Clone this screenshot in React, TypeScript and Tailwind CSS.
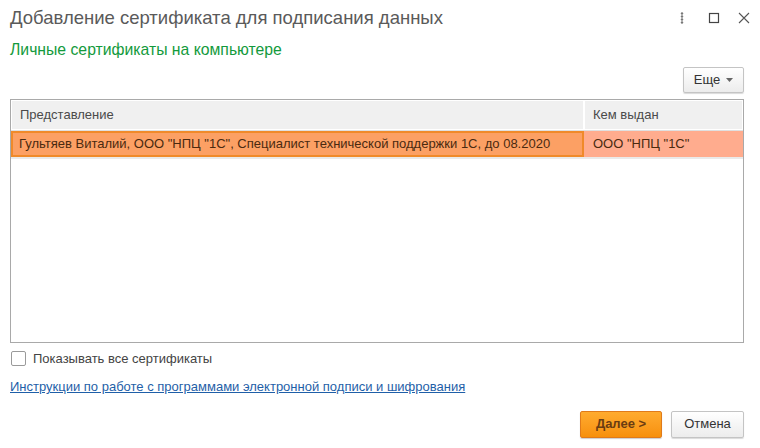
export default function App() {
  return (
    <div className="relative h-[448px] w-[760px] overflow-hidden bg-white font-['Liberation_Sans',Arial,sans-serif] text-[#333]">
      {/* title bar */}
      <div className="flex h-[36px] items-center pl-[10px] pr-[8px]">
        <h1 className="flex-1 text-[18.5px] text-[#5a5a5a]">Добавление сертификата для подписания данных</h1>
        <div className="flex items-center gap-[18px] pr-[2px]">
          <svg width="4" height="12" viewBox="0 0 4 12" className="mr-[6px]">
            <circle cx="2" cy="1.5" r="1.2" fill="#777" />
            <circle cx="2" cy="4.5" r="1.2" fill="#777" />
            <circle cx="2" cy="7.5" r="1.2" fill="#777" />
            <circle cx="2" cy="10.5" r="1.2" fill="#777" />
          </svg>
          <svg width="12" height="12" viewBox="0 0 12 12">
            <rect x="1.5" y="1.5" width="9" height="9" fill="none" stroke="#444" strokeWidth="1.2" />
          </svg>
          <svg width="12" height="12" viewBox="0 0 12 12">
            <path d="M1 1L11 11M11 1L1 11" stroke="#555" strokeWidth="1.1" />
          </svg>
        </div>
      </div>

      <div className="pl-[10px] pt-[2px] text-[15.75px] text-[#139a3c]">Личные сертификаты на компьютере</div>

      <div className="flex justify-end pr-[16px] pt-[5px]">
        <button className="flex h-[26px] w-[61px] items-center justify-center gap-[6px] rounded-[2px] border border-[#c4c4c4] bg-gradient-to-b from-white to-[#ececec] text-[13px] text-[#333] shadow-[0_1px_1px_rgba(0,0,0,0.15)]">
          Еще
          <svg width="7" height="4" viewBox="0 0 7 4"><path d="M0 0h7L3.5 4z" fill="#666" /></svg>
        </button>
      </div>

      {/* table */}
      <div className="mx-[10px] mt-[6px] h-[244px] w-[734px] border border-[#a9a9a9] text-[13px]">
        <div className="flex h-[31px] border-b border-[#e0e0e0]">
          <div className="flex w-[573px] items-center border border-white bg-[#f0f0f0] pl-[8px] text-[#4a4a4a]">Представление</div>
          <div className="flex flex-1 items-center border border-white bg-[#f0f0f0] pl-[8px] text-[#4a4a4a]">Кем выдан</div>
        </div>
        <div className="flex h-[28px] border-b-2 border-[#eaeaea]">
          <div className="flex w-[573px] items-center border-2 border-[#f08a2a] bg-[#fca064] pl-[6px] text-[#4a2a10]">
            Гультяев Виталий, ООО "НПЦ "1С", Специалист технической поддержки 1С, до 08.2020
          </div>
          <div className="flex flex-1 items-center bg-[#ffac8e] pl-[9px] text-[#4a2a10]">ООО "НПЦ "1С"</div>
        </div>
      </div>

      <label className="mt-[6px] flex items-center pl-[11px] text-[13px] text-[#444]">
        <span className="h-[15px] w-[15px] rounded-[2px] border border-[#9a9a9a] bg-white" />
        <span className="ml-[7px]">Показывать все сертификаты</span>
      </label>

      <a className="ml-[10px] mt-[9px] block text-[13px] text-[#1f5fa8] underline">
        Инструкции по работе с программами электронной подписи и шифрования
      </a>

      <div className="mt-[14px] flex justify-end gap-[9px] pr-[16px]">
        <button className="h-[27px] w-[82px] rounded-[2px] border border-[#e07b1a] bg-gradient-to-b from-[#ffab2e] to-[#f7900a] text-[13px] font-bold text-[#6a3c12] shadow-[0_1px_1px_rgba(0,0,0,0.2)]">
          Далее &gt;
        </button>
        <button className="h-[27px] w-[73px] rounded-[2px] border border-[#c4c4c4] bg-gradient-to-b from-white to-[#ececec] text-[13px] text-[#333] shadow-[0_1px_1px_rgba(0,0,0,0.15)]">
          Отмена
        </button>
      </div>
    </div>
  );
}
